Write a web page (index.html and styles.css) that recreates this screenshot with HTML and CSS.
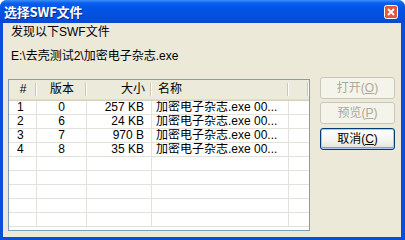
FILE: index.html
```html
<!DOCTYPE html>
<html>
<head>
<meta charset="utf-8">
<link rel="stylesheet" href="styles.css">
</head>
<body>
<div class="window">
  <div class="titlebar">
    <span class="title">选择SWF文件</span>
    <span class="close">
      <svg width="14" height="14" viewBox="0 0 14 14">
        <rect x="0.5" y="0.5" width="13" height="13" rx="2" fill="#e2593a" stroke="#fff"/>
        <path d="M4 4 L10 10 M10 4 L4 10" stroke="#fff" stroke-width="1.8"/>
      </svg>
    </span>
  </div>
  <div class="client">
    <div class="label">发现以下SWF文件</div>
    <div class="path">E:\去壳测试2\加密电子杂志.exe</div>
    <div class="main">
      <div class="list">
        <div class="row head">
          <div class="c c1 center">#</div>
          <div class="c c2 center">版本</div>
          <div class="c c3 right">大小</div>
          <div class="c c4">名称</div>
          <div class="c c5"></div>
        </div>
        <div class="row">
          <div class="c c1">1</div><div class="c c2 center">0</div><div class="c c3 right">257 KB</div><div class="c c4">加密电子杂志.exe 00...</div><div class="c c5"></div>
        </div>
        <div class="row">
          <div class="c c1">2</div><div class="c c2 center">6</div><div class="c c3 right">24 KB</div><div class="c c4">加密电子杂志.exe 00...</div><div class="c c5"></div>
        </div>
        <div class="row">
          <div class="c c1">3</div><div class="c c2 center">7</div><div class="c c3 right">970 B</div><div class="c c4">加密电子杂志.exe 00...</div><div class="c c5"></div>
        </div>
        <div class="row">
          <div class="c c1">4</div><div class="c c2 center">8</div><div class="c c3 right">35 KB</div><div class="c c4">加密电子杂志.exe 00...</div><div class="c c5"></div>
        </div>
        <div class="row"><div class="c c1"></div><div class="c c2"></div><div class="c c3"></div><div class="c c4"></div><div class="c c5"></div></div>
        <div class="row"><div class="c c1"></div><div class="c c2"></div><div class="c c3"></div><div class="c c4"></div><div class="c c5"></div></div>
        <div class="row"><div class="c c1"></div><div class="c c2"></div><div class="c c3"></div><div class="c c4"></div><div class="c c5"></div></div>
        <div class="row"><div class="c c1"></div><div class="c c2"></div><div class="c c3"></div><div class="c c4"></div><div class="c c5"></div></div>
        <div class="row"><div class="c c1"></div><div class="c c2"></div><div class="c c3"></div><div class="c c4"></div><div class="c c5"></div></div>
      </div>
      <div class="buttons">
        <div class="btn disabled">打开(<u>O</u>)</div>
        <div class="btn disabled">预览(<u>P</u>)</div>
        <div class="btn default">取消(<u>C</u>)</div>
      </div>
    </div>
  </div>
</div>
</body>
</html>
```
FILE: styles.css
```css
* { box-sizing: border-box; }
html, body { margin: 0; padding: 0; }
body {
  width: 405px;
  height: 240px;
  overflow: hidden;
  font-family: "Liberation Sans", "Noto Sans CJK SC", sans-serif;
  font-size: 12px;
  color: #000;
  background: #fff;
}
.window {
  width: 405px;
  height: 240px;
  display: flex;
  flex-direction: column;
  background: #0a4fdc;
  border-radius: 7px 7px 0 0;
  overflow: hidden;
}
.titlebar {
  height: 23px;
  flex: none;
  display: flex;
  align-items: center;
  justify-content: space-between;
  padding: 0 7px 0 4px;
  background: linear-gradient(#3d8ef7 0, #0a5ff0 3px, #0154e6 8px, #0550dc 16px, #0a48d0 23px);
}
.title {
  color: #fff;
  font-family: "Noto Sans CJK SC", sans-serif;
  font-weight: bold;
  font-size: 13px;
  line-height: 16px;
  text-shadow: 1px 1px 0 #0b2a8c;
  letter-spacing: -0.2px;
}
.close { display: flex; margin-top: 1px; }
.client {
  flex: 1;
  margin: 0 4px 3px 3px;
  background: #ece9d8;
  padding: 2px 0 0 5px;
  display: flex;
  flex-direction: column;
}
.label, .path {
  line-height: 14px;
  height: 14px;
  padding-left: 3px;
  white-space: nowrap;
}
.path { margin-top: 10px; }
.main {
  display: flex;
  margin-top: 14px;
  align-items: flex-start;
}
.list {
  margin-top: 2px;
  width: 302px;
  height: 152px;
  border: 1px solid #7f9db9;
  background: #fff;
  overflow: hidden;
}
.row {
  display: flex;
  height: 14px;
  border-bottom: 1px solid #e2e1da;
}
.row .c {
  border-right: 1px solid #e2e1da;
  line-height: 13px;
  white-space: nowrap;
  overflow: hidden;
  height: 13px;
}
.row.head {
  height: 21px;
  background: #ebeadb;
  border-bottom: none;
  box-shadow: inset 0 -1px 0 #d6d2c2, inset 0 -2px 0 #e2dec6;
}
.row.head .c {
  height: 19px;
  line-height: 19px;
  margin: 0;
  border-right: none;
  background:
    linear-gradient(#cbc7b8, #cbc7b8) right 1px top 3px / 1px 13px no-repeat,
    linear-gradient(#fff, #fff) right 0 top 3px / 1px 13px no-repeat;
}
.c1 { width: 28px; padding-left: 8px; }
.c2 { width: 50px; }
.c3 { width: 65px; padding-right: 7px; }
.c4 { width: 137px; padding-left: 4px; }
.c5 { flex: 1; border-right: none !important; }
.head .c1 { padding-left: 0; }
.head .c4 { padding-left: 6px; }
.center { text-align: center; }
.right { text-align: right; }
.buttons {
  margin-left: 10px;
  display: flex;
  flex-direction: column;
  gap: 3px;
}
.btn {
  width: 75px;
  height: 22px;
  display: flex;
  align-items: center;
  justify-content: center;
  border-radius: 3px;
  line-height: 14px;
}
.btn u { text-decoration: underline; }
.btn.disabled {
  border: 1px solid #c9c7ba;
  background: #f5f4ea;
  color: #aca899;
}
.btn.default {
  margin-top: 1px;
  border: 1px solid #003c74;
  background: linear-gradient(#ffffff, #f3f3ef 60%, #e2e0d6);
  box-shadow: inset 0 0 0 1px #a9c6f5, inset 0 -1px 0 1px #7da2ce;
  color: #000;
}
```
